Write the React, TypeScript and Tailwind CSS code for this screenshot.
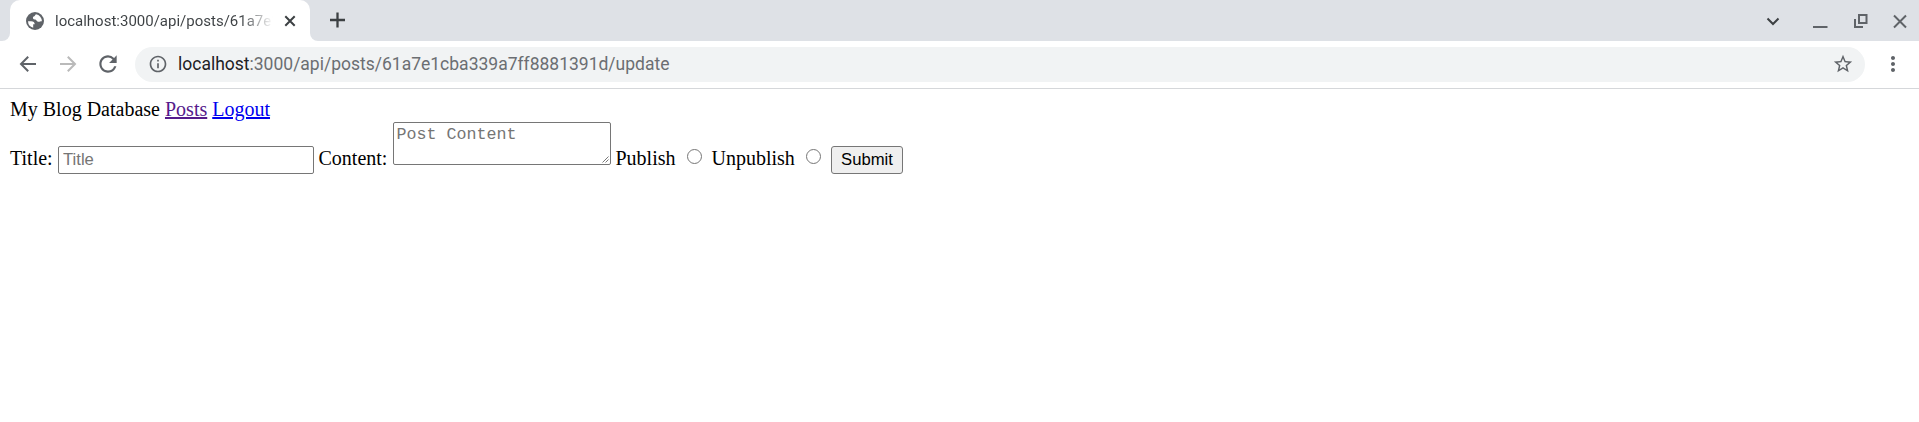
import { MdRefresh, MdInfoOutline, MdStarOutline, MdMoreVert } from "react-icons/md";

function Globe() {
  return (
    <svg className="size-[18px] shrink-0" viewBox="0 0 18 18" fill="none">
      <circle cx="9" cy="9" r="9" fill="#5f6368" />
      <path
        fill="#fff"
        d="M10 2.300C9 3 9.300 3.800 8.300 4.300 7.200 4.800 6.800 5.200 7 6.200 7.300 7.400 8.300 7.400 9.300 7.600 10.800 8 10.500 9.600 12 9.800 13.400 10 14.200 9.400 15.900 9.300A7 7 0 0 0 10 2.300ZM2 9.300H5.200C7.400 9.300 8.700 10.300 8.700 12.200H7.200V15.800A7 7 0 0 1 2 9.300Z"
      />
    </svg>
  );
}

function TabStrip() {
  return (
    <div className="flex h-[41px] bg-[#dee1e6]">
      <div className="flex h-full w-[10px] bg-white">
        <div className="h-full w-full rounded-br-[8px] bg-[#dee1e6]" />
      </div>
      <div className="flex h-full w-[300px] items-center rounded-t-[10px] bg-white pl-[16px]">
        <Globe />
        <div className="ml-[11px] w-[218px] overflow-hidden whitespace-nowrap bg-linear-to-r from-[#3c4043] from-85% to-transparent bg-clip-text text-[15px] leading-5 text-transparent">
          localhost:3000/api/posts/61a7e1cba339a7ff8881391d/update
        </div>
        <svg className="ml-[11px] size-3 shrink-0" viewBox="0 0 12 12" stroke="#3c4043" strokeWidth="2">
          <path d="M1.300 1.300 10.700 10.700M10.700 1.300 1.300 10.700" />
        </svg>
      </div>
      <div className="flex h-full w-[10px] bg-white">
        <div className="h-full w-full rounded-bl-[8px] bg-[#dee1e6]" />
      </div>
      <svg className="mt-[12px] ml-[9px] size-4" viewBox="0 0 16 16" stroke="#3c4043" strokeWidth="2.300">
        <path d="M8.500.500v15M1 8h15" />
      </svg>
      <div className="flex-1" />
      <svg className="h-[41px] w-[160px]" viewBox="0 0 160 41" fill="none" stroke="#5f6368" strokeWidth="2">
        <path d="M8.500 18.500 14 24 19.500 18.500" stroke="#3c4043" />
        <path d="M54 27h14.500" />
        <path d="M100 15h7.500v8h-7.500zM96 19v8h8" />
        <path d="M135 15.500 147 27.500M147 15.500 135 27.500" />
      </svg>
    </div>
  );
}

function Toolbar() {
  return (
    <div className="flex h-[48px] items-center border-b border-[#d5d7da] bg-white pb-[1px] text-[#5f6368]">
      <svg className="ml-[16px] size-6" viewBox="0 0 24 24" fill="none" stroke="currentColor" strokeWidth="2">
        <path d="M20 12H5.500M12.200 4.700 5 12l7.200 7.300" />
      </svg>
      <svg className="ml-[16px] size-6 text-[#bababa]" viewBox="0 0 24 24" fill="none" stroke="currentColor" strokeWidth="2">
        <path d="M4 12h14.500M11.800 4.700 19 12l-7.200 7.300" />
      </svg>
      <MdRefresh className="ml-[15px] size-[26px]" />
      <div className="mr-[16px] ml-[14px] flex h-[35px] flex-1 items-center rounded-full bg-[#f1f3f4] pr-[11px] pl-[13px]">
        <MdInfoOutline className="size-5" />
        <span className="ml-[10px] text-[17.500px] leading-6 text-[#6b6e72]">
          <span className="text-[#202124]">localhost</span>:3000/api/posts/61a7e1cba339a7ff8881391d/update
        </span>
        <MdStarOutline className="ml-auto size-[22px]" />
      </div>
      <MdMoreVert className="mr-[14px] size-6" />
    </div>
  );
}

function Radio() {
  return <input type="radio" name="published" className="size-[15px] appearance-none rounded-full border border-[#767676] bg-white" />;
}

function UpdateForm() {
  return (
    <form className="flex items-start leading-[23px]" onSubmit={(e) => e.preventDefault()}>
      <label className="mt-[25px] w-[48px]">Title:</label>
      <input
        placeholder="Title"
        className="mt-[24px] h-[28px] w-[256px] rounded-[2px] border border-[#767676] px-1 font-['Liberation_Sans',sans-serif] text-[16.667px] placeholder:text-[#757575]"
      />
      <label className="mt-[25px] ml-[4.500px] w-[74.500px]">Content:</label>
      <div className="relative h-[43px] w-[218px]">
        <textarea
          placeholder="Post Content"
          className="block h-[43px] w-[218px] resize-none overflow-hidden rounded-[2px] border border-[#767676] px-[2.500px] py-[2px] font-['Liberation_Mono',monospace] text-[16.667px] leading-[19px] placeholder:text-[#757575]"
        />
        <svg className="absolute right-[2px] bottom-[2px] size-[7px]" viewBox="0 0 7 7" stroke="#555" strokeWidth=".8">
          <path d="M.5 6.500 6.500.5M3.500 6.500 6.500 3.500" />
        </svg>
      </div>
      <label className="mt-[25px] ml-[4.500px] w-[71.500px]">Publish</label>
      <div className="mt-[27px] flex w-[24.500px]"><Radio /></div>
      <label className="mt-[25px] w-[94.500px]">Unpublish</label>
      <div className="mt-[27px] flex w-[25px]"><Radio /></div>
      <button className="mt-[24px] h-[28px] w-[72px] rounded-[3px] border border-[#767676] bg-[#efefef] font-['Liberation_Sans',sans-serif] text-[16.667px] leading-5">
        Submit
      </button>
    </form>
  );
}

export default function App() {
  return (
    <div className="min-h-[422px] bg-white font-[Roboto,sans-serif]">
      <TabStrip />
      <Toolbar />
      <main className="px-[10px] pt-[9px] font-['Liberation_Serif',serif] text-[20px] leading-[23px] text-black">
        <nav className="h-[24px]">
          My Blog Database{" "}
          <a href="#posts" className="text-[#551a8b] underline">Posts</a>{" "}
          <a href="#logout" className="text-[#0000ee] underline">Logout</a>
        </nav>
        <UpdateForm />
      </main>
    </div>
  );
}
